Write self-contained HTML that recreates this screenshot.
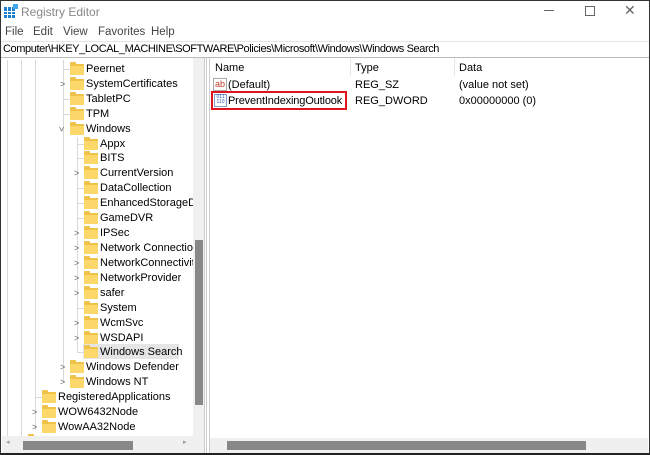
<!DOCTYPE html>
<html><head><meta charset="utf-8"><style>
*{margin:0;padding:0;box-sizing:border-box}
body{width:650px;height:455px;overflow:hidden;background:#fff;font-family:"Liberation Sans",sans-serif;font-size:11px;color:#000;position:relative}
.a{position:absolute;white-space:nowrap}
.f{position:absolute;width:14px;height:11px;background:#fbd869;border-top:2px solid #efc24a}
.f:before{content:"";position:absolute;left:0;top:-4px;width:6px;height:3px;background:#efc24a;border-radius:1px 1px 0 0}
.t{position:absolute;line-height:14px}
.c{position:absolute;font-size:9px;color:#666;line-height:14px}
.vl{position:absolute;width:1px;background:#d8d8d8}
.hl{position:absolute;height:1px;background:#d8d8d8}
</style></head><body>
<div class="a" style="left:0;top:0;width:650px;height:455px;border:1px solid #333;border-bottom:2px solid #222"></div>
<div class="a" style="left:4px;top:4px;width:14px;height:14px">
<div class="a" style="left:0;top:3px;width:11px;height:11px;background:#1b7fd1"></div>
<div class="a" style="left:9px;top:0;width:5px;height:5px;background:#3fa9f0"></div>
<div class="a" style="left:3px;top:3px;width:1px;height:11px;background:#fff"></div>
<div class="a" style="left:7px;top:3px;width:1px;height:11px;background:#fff"></div>
<div class="a" style="left:0;top:7px;width:11px;height:1px;background:#fff"></div>
<div class="a" style="left:0;top:10px;width:11px;height:1px;background:#fff"></div>
</div>
<div class="a" style="left:21px;top:5px;font-size:12px;color:#888">Registry Editor</div>
<div class="a" style="left:544px;top:10px;width:10px;height:1px;background:#666"></div>
<div class="a" style="left:585px;top:6px;width:10px;height:10px;border:1px solid #666"></div>
<div class="a" style="left:624px;top:2px;font-size:14px;color:#666">✕</div>
<div class="a" style="left:5px;top:26px;font-size:11.5px;color:#444">File</div>
<div class="a" style="left:33px;top:26px;font-size:11.5px;color:#444">Edit</div>
<div class="a" style="left:63px;top:26px;font-size:11.5px;color:#444">View</div>
<div class="a" style="left:98px;top:26px;font-size:11.5px;color:#444">Favorites</div>
<div class="a" style="left:151px;top:26px;font-size:11.5px;color:#444">Help</div>
<div class="a" style="left:1px;top:41px;width:648px;height:1px;background:#e5e5e5"></div>
<div class="a" style="left:3px;top:43px;font-size:11px;letter-spacing:-0.4px">Computer\HKEY_LOCAL_MACHINE\SOFTWARE\Policies\Microsoft\Windows\Windows Search</div>
<div class="a" style="left:1px;top:57px;width:648px;height:1px;background:#bbb"></div>
<div class="a" style="left:2px;top:58px;width:203px;height:395px;overflow:hidden;border-right:1px solid #ccc">
<div class="a" style="left:0;top:2px;width:191px;height:376px;overflow:hidden">
<div class="vl" style="left:5px;top:0;height:380px"></div>
<div class="vl" style="left:19px;top:0;height:380px"></div>
<div class="vl" style="left:33px;top:0;height:370px"></div>
<div class="vl" style="left:61px;top:0;height:322px"></div>
<div class="vl" style="left:75px;top:77px;height:215px"></div>
<div class="hl" style="left:61px;top:9px;width:8px"></div>
<div class="hl" style="left:61px;top:39px;width:8px"></div>
<div class="hl" style="left:61px;top:54px;width:8px"></div>
<div class="hl" style="left:33px;top:337px;width:8px"></div>
<div class="hl" style="left:75px;top:84px;width:8px"></div>
<div class="hl" style="left:75px;top:98px;width:8px"></div>
<div class="hl" style="left:75px;top:128px;width:8px"></div>
<div class="hl" style="left:75px;top:143px;width:8px"></div>
<div class="hl" style="left:75px;top:158px;width:8px"></div>
<div class="hl" style="left:75px;top:248px;width:8px"></div>
<div class="hl" style="left:75px;top:292px;width:8px"></div>
<div class="a" style="left:81px;top:284px;width:96px;height:15px;background:#e5e5e5"></div>
<div class="f" style="left:68px;top:4px"></div><div class="t" style="left:84px;top:2px">Peernet</div>
<div class="c" style="left:58px;top:17px">&gt;</div><div class="f" style="left:68px;top:19px"></div><div class="t" style="left:84px;top:17px">SystemCertificates</div>
<div class="f" style="left:68px;top:34px"></div><div class="t" style="left:84px;top:32px">TabletPC</div>
<div class="f" style="left:68px;top:49px"></div><div class="t" style="left:84px;top:47px">TPM</div>
<div class="c" style="left:57px;top:62px;transform:rotate(90deg)">&gt;</div><div class="f" style="left:68px;top:64px"></div><div class="t" style="left:84px;top:62px">Windows</div>
<div class="f" style="left:82px;top:79px"></div><div class="t" style="left:98px;top:77px">Appx</div>
<div class="f" style="left:82px;top:93px"></div><div class="t" style="left:98px;top:91px">BITS</div>
<div class="c" style="left:72px;top:106px">&gt;</div><div class="f" style="left:82px;top:108px"></div><div class="t" style="left:98px;top:106px">CurrentVersion</div>
<div class="f" style="left:82px;top:123px"></div><div class="t" style="left:98px;top:121px">DataCollection</div>
<div class="f" style="left:82px;top:138px"></div><div class="t" style="left:98px;top:136px">EnhancedStorageDevices</div>
<div class="f" style="left:82px;top:153px"></div><div class="t" style="left:98px;top:151px">GameDVR</div>
<div class="c" style="left:72px;top:166px">&gt;</div><div class="f" style="left:82px;top:168px"></div><div class="t" style="left:98px;top:166px">IPSec</div>
<div class="c" style="left:72px;top:181px">&gt;</div><div class="f" style="left:82px;top:183px"></div><div class="t" style="left:98px;top:181px">Network Connections</div>
<div class="c" style="left:72px;top:196px">&gt;</div><div class="f" style="left:82px;top:198px"></div><div class="t" style="left:98px;top:196px">NetworkConnectivityStatus</div>
<div class="c" style="left:72px;top:211px">&gt;</div><div class="f" style="left:82px;top:213px"></div><div class="t" style="left:98px;top:211px">NetworkProvider</div>
<div class="c" style="left:72px;top:226px">&gt;</div><div class="f" style="left:82px;top:228px"></div><div class="t" style="left:98px;top:226px">safer</div>
<div class="f" style="left:82px;top:243px"></div><div class="t" style="left:98px;top:241px">System</div>
<div class="c" style="left:72px;top:256px">&gt;</div><div class="f" style="left:82px;top:258px"></div><div class="t" style="left:98px;top:256px">WcmSvc</div>
<div class="c" style="left:72px;top:271px">&gt;</div><div class="f" style="left:82px;top:273px"></div><div class="t" style="left:98px;top:271px">WSDAPI</div>
<div class="f" style="left:82px;top:287px"></div><div class="t" style="left:98px;top:285px">Windows Search</div>
<div class="c" style="left:58px;top:300px">&gt;</div><div class="f" style="left:68px;top:302px"></div><div class="t" style="left:84px;top:300px">Windows Defender</div>
<div class="c" style="left:58px;top:315px">&gt;</div><div class="f" style="left:68px;top:317px"></div><div class="t" style="left:84px;top:315px">Windows NT</div>
<div class="f" style="left:40px;top:332px"></div><div class="t" style="left:56px;top:330px">RegisteredApplications</div>
<div class="c" style="left:30px;top:345px">&gt;</div><div class="f" style="left:40px;top:347px"></div><div class="t" style="left:56px;top:345px">WOW6432Node</div>
<div class="c" style="left:30px;top:360px">&gt;</div><div class="f" style="left:40px;top:362px"></div><div class="t" style="left:56px;top:360px">WowAA32Node</div>
<div class="c" style="left:16px;top:374px">&gt;</div><div class="f" style="left:26px;top:376px"></div><div class="t" style="left:42px;top:374px">SYSTEM</div>
</div>
<div class="a" style="left:191px;top:0;width:12px;height:378px;background:#f0f0f0"></div>
<div class="a" style="left:193px;top:182px;width:8px;height:165px;background:#888"></div>
<div class="a" style="left:0;top:378px;width:203px;height:17px;background:#f0f0f0"></div>
<div class="a" style="left:21px;top:383px;width:110px;height:9px;background:#888"></div>
<div class="a" style="left:4px;top:380px;font-size:7px;color:#999">◂</div>
<div class="a" style="left:181px;top:380px;font-size:7px;color:#999">▸</div>
</div>
<div class="a" style="left:206px;top:58px;width:1px;height:395px;background:#ccc"></div>
<div class="a" style="left:209px;top:58px;width:1px;height:395px;background:#ccc"></div>
<div class="a" style="left:215px;top:62px">Name</div>
<div class="a" style="left:355px;top:62px">Type</div>
<div class="a" style="left:459px;top:62px">Data</div>
<div class="a" style="left:350px;top:58px;width:1px;height:18px;background:#e5e5e5"></div>
<div class="a" style="left:454px;top:58px;width:1px;height:18px;background:#e5e5e5"></div>
<div class="a" style="left:213px;top:78px;width:14px;height:13px;border:1px solid #aaa;font-size:9px;color:#c0392b;line-height:11px;text-align:center;background:#fff">ab</div>
<div class="a" style="left:228px;top:79px">(Default)</div>
<div class="a" style="left:355px;top:79px">REG_SZ</div>
<div class="a" style="left:459px;top:79px">(value not set)</div>
<div class="a" style="left:211px;top:91px;width:136px;height:19px;border:2px solid #e0141e"></div>
<div class="a" style="left:214px;top:94px;width:13px;height:13px;border:1px solid #7aa0d0;font-size:5px;color:#2a5db0;line-height:5px;text-align:center;background:#fff">011<br>110</div>
<div class="a" style="left:228px;top:95px;letter-spacing:-0.15px">PreventIndexingOutlook</div>
<div class="a" style="left:355px;top:95px">REG_DWORD</div>
<div class="a" style="left:459px;top:95px">0x00000000 (0)</div>
<div class="a" style="left:210px;top:438px;width:438px;height:15px;background:#f0f0f0"></div>
<div class="a" style="left:227px;top:441px;width:359px;height:9px;background:#888"></div>
</body></html>
